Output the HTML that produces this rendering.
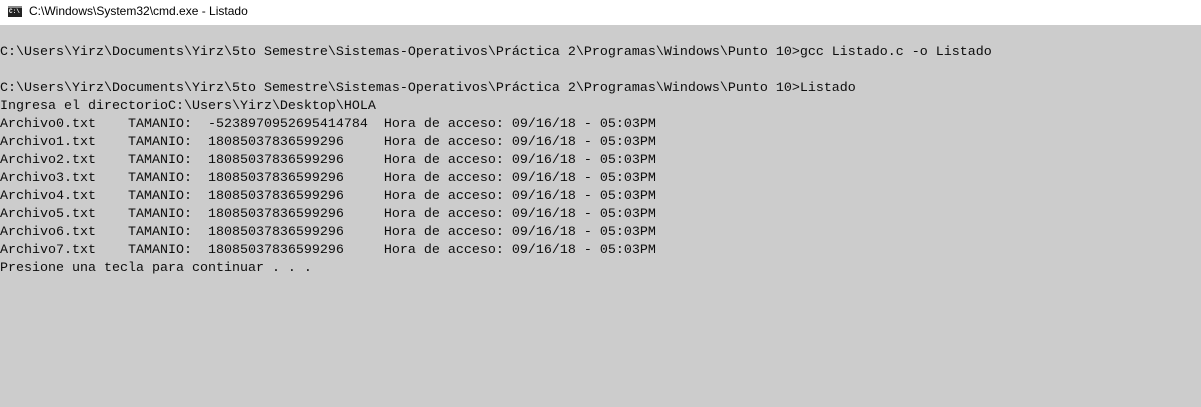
<!DOCTYPE html>
<html><head><meta charset="utf-8"><style>
html,body{margin:0;padding:0;width:1201px;height:407px;overflow:hidden;background:#cccccc}
.t{position:absolute;left:0;top:0;width:1201px;height:25px;background:#fff}
.ic{position:absolute;left:8px;top:6px;width:14px;height:11px;background:#222;border-top:2px solid #888;box-sizing:border-box}
.ic span{position:absolute;left:1px;top:1px;font:bold 6px "Liberation Mono",monospace;color:#fff;line-height:6px}
.tt{position:absolute;left:29px;top:4px;font:12px "Liberation Sans",sans-serif;color:#000}
pre{position:absolute;left:0;top:44px;margin:0;font:13.333px/18px "Liberation Mono",monospace;color:#0c0c0c}
</style></head><body>
<div class="t"><div class="ic"><span>C:\</span></div><div class="tt">C:\Windows\System32\cmd.exe - Listado</div></div>
<pre>C:\Users\Yirz\Documents\Yirz\5to Semestre\Sistemas-Operativos\Práctica 2\Programas\Windows\Punto 10&gt;gcc Listado.c -o Listado

C:\Users\Yirz\Documents\Yirz\5to Semestre\Sistemas-Operativos\Práctica 2\Programas\Windows\Punto 10&gt;Listado
Ingresa el directorioC:\Users\Yirz\Desktop\HOLA
Archivo0.txt    TAMANIO:  -5238970952695414784  Hora de acceso: 09/16/18 - 05:03PM
Archivo1.txt    TAMANIO:  18085037836599296     Hora de acceso: 09/16/18 - 05:03PM
Archivo2.txt    TAMANIO:  18085037836599296     Hora de acceso: 09/16/18 - 05:03PM
Archivo3.txt    TAMANIO:  18085037836599296     Hora de acceso: 09/16/18 - 05:03PM
Archivo4.txt    TAMANIO:  18085037836599296     Hora de acceso: 09/16/18 - 05:03PM
Archivo5.txt    TAMANIO:  18085037836599296     Hora de acceso: 09/16/18 - 05:03PM
Archivo6.txt    TAMANIO:  18085037836599296     Hora de acceso: 09/16/18 - 05:03PM
Archivo7.txt    TAMANIO:  18085037836599296     Hora de acceso: 09/16/18 - 05:03PM
Presione una tecla para continuar . . .</pre>
</body></html>
